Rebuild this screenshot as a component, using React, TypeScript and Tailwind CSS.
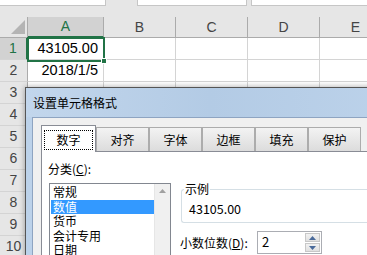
import React from "react";

const XL = { fontFamily: '"Liberation Sans", Arial, sans-serif' };
const CN = { fontFamily: '"Noto Sans CJK SC", "Noto Sans", sans-serif' };

function Row({ n }: { n: number }) {
  const sel = n === 1;
  return (
    <div className="flex h-[22px]">
      <div
        className={
          "w-[28px] shrink-0 flex items-center justify-center text-[14px] border-b border-[#d4d4d4] " +
          (sel ? "bg-[#d2d2d2] text-[#217346] border-r-2 border-r-[#217346]" : "bg-[#e6e6e6] text-[#444] border-r border-r-[#ababab]")
        }
      >
        {n}
      </div>
      <div className="w-[76px] shrink-0 border-r border-b border-[#d4d4d4] flex items-center justify-end pr-[5px] text-[14.5px] text-black">
        {n === 1 ? "43105.00" : n === 2 ? "2018/1/5" : ""}
      </div>
      <div className="w-[72px] shrink-0 border-r border-b border-[#d4d4d4]" />
      <div className="w-[72px] shrink-0 border-r border-b border-[#d4d4d4]" />
      <div className="w-[72px] shrink-0 border-r border-b border-[#d4d4d4]" />
      <div className="w-[72px] shrink-0 border-r border-b border-[#d4d4d4]" />
    </div>
  );
}

function Tab({ label, active }: { label: string; active?: boolean }) {
  if (active) {
    return (
      <div className="relative z-10 w-[55px] h-[27px] -mb-px bg-white border border-b-0 border-[#898c95] flex items-center justify-center px-[2px] pt-[2px]">
        <div className="w-full h-[20px] border border-dotted border-black flex items-center justify-center text-[12px] text-black">
          {label}
        </div>
      </div>
    );
  }
  return (
    <div className="w-[53px] h-[24px] bg-gradient-to-b from-[#f3f3f3] to-[#dcdcdc] border border-b-0 border-[#acacac] flex items-center justify-center text-[12px] text-black">
      {label}
    </div>
  );
}

const items = ["常规", "数值", "货币", "会计专用", "日期"];

export default function App() {
  const rows = [1, 2, 3, 4, 5, 6, 7, 8, 9, 10];
  return (
    <div className="relative w-[367px] h-[255px] overflow-hidden bg-white" style={XL}>
      {/* formula bar strip */}
      <div className="h-[17px] bg-[#e6e6e6] flex items-start">
        <div className="w-[106px] h-[6px] bg-white border-r border-b border-[#c6c6c6]" />
        <div className="w-[31px]" />
        <div className="w-[110px] h-[6px] bg-white border-x border-b border-[#c6c6c6]" />
        <div className="w-[4px]" />
        <div className="flex-1 h-[6px] bg-white border-l border-b border-[#c6c6c6]" />
      </div>
      {/* column headers */}
      <div className="flex h-[21px] bg-[#e6e6e6] text-[14px] text-[#444]">
        <div className="w-[28px] shrink-0 relative border-r border-b border-[#ababab]">
          <svg className="absolute left-[11px] top-[3px]" width="14" height="14" viewBox="0 0 14 14">
            <polygon points="14,0 14,14 0,14" fill="#b4b4b4" />
          </svg>
        </div>
        <div className="w-[76px] shrink-0 bg-[#d2d2d2] border-r border-[#ababab] border-b-2 border-b-[#217346] flex items-center justify-center text-[#217346]">
          A
        </div>
        <div className="w-[72px] shrink-0 border-r border-b border-[#ababab] flex items-center justify-center">B</div>
        <div className="w-[72px] shrink-0 border-r border-b border-[#ababab] flex items-center justify-center">C</div>
        <div className="w-[72px] shrink-0 border-r border-b border-[#ababab] flex items-center justify-center">D</div>
        <div className="w-[72px] shrink-0 border-r border-b border-[#ababab] flex items-center justify-center">E</div>
      </div>
      {rows.map((n) => (
        <Row key={n} n={n} />
      ))}

      {/* selection of A1 */}
      <div className="absolute left-[27px] top-[37px] w-[78px] h-[25px] border-2 border-[#217346]" />
      <div className="absolute left-[101px] top-[58px] w-[6px] h-[6px] bg-[#217346] border border-white" />

      {/* dialog */}
      <div className="absolute left-[25px] top-[87px] w-[370px] h-[190px] border border-[#555] bg-[#bcd2ea] shadow-[0_0_6px_rgba(0,0,0,0.35)]" style={CN}>
        <div className="h-[29px] bg-gradient-to-r from-[#c2d6ec] via-[#b3cbe5] to-[#bcd2ea] flex items-center pl-[7px] text-[12px] text-black">
          设置单元格格式
        </div>
        <div className="ml-[6px] h-[170px] bg-[#f0f0f0] border border-[#8ea4c1] pl-[8px] pt-[6px]">
          <div className="flex items-end h-[27px]">
            <Tab label="数字" active />
            <Tab label="对齐" />
            <Tab label="字体" />
            <Tab label="边框" />
            <Tab label="填充" />
            <Tab label="保护" />
          </div>
          <div className="h-[120px] bg-white border border-[#898c95] flex">
            <div className="w-[130px] shrink-0 pl-[6px]">
              <div className="h-[31px] flex items-center text-[12px] text-black pt-[2px]">
                分类(<span className="underline">C</span>):
              </div>
              <div className="ml-[1px] w-[122px] h-[90px] border border-[#828790] flex">
                <div className="flex-1 pt-[1px] pl-px text-[12px] text-black">
                  {items.map((t, i) => (
                    <div
                      key={t}
                      className={"h-[14.5px] pl-[2px] leading-[14px] overflow-visible " + (i === 1 ? "bg-[#3399ff] text-white" : "")}
                    >
                      {t}
                    </div>
                  ))}
                </div>
                <div className="w-[16px] bg-[#f0f0f0] border-l border-[#e6e6e6] flex justify-center pt-[5px]">
                  <svg width="7" height="4" viewBox="0 0 7 4">
                    <polygon points="0,4 7,4 3.5,0" fill="#a0a0a0" />
                  </svg>
                </div>
              </div>
            </div>
            <div className="flex-1 pt-[37px]">
              <div className="relative ml-[9px] h-[34px] border border-r-0 border-[#d5dfe5] rounded-l-[3px]">
                <div className="absolute -top-[9px] left-[2px] bg-white px-[1px] text-[12px] leading-[16px] text-black">示例</div>
                <div className="pl-[7px] pt-[11px] text-[12.5px] leading-[16px] text-black">43105.00</div>
              </div>
              <div className="mt-[8px] flex items-center h-[23px]">
                <div className="text-[12px] text-black w-[77px] ml-[8px]">
                  小数位数(<span className="underline">D</span>):
                </div>
                <div className="w-[65px] h-[23px] border border-[#abadb3] bg-white flex">
                  <div className="flex-1 pl-[4px] text-[13px] leading-[20px] text-black">2</div>
                  <div className="w-[17px] flex flex-col p-px gap-px">
                    <div className="flex-1 bg-gradient-to-b from-[#f2f2f2] to-[#e0e0e0] border border-[#c8c8c8] flex items-center justify-center">
                      <svg width="7" height="4" viewBox="0 0 7 4">
                        <polygon points="0,4 7,4 3.5,0" fill="#4a6a9a" />
                      </svg>
                    </div>
                    <div className="flex-1 bg-gradient-to-b from-[#f2f2f2] to-[#e0e0e0] border border-[#c8c8c8] flex items-center justify-center">
                      <svg width="7" height="4" viewBox="0 0 7 4">
                        <polygon points="0,0 7,0 3.5,4" fill="#4a6a9a" />
                      </svg>
                    </div>
                  </div>
                </div>
              </div>
            </div>
          </div>
        </div>
      </div>
    </div>
  );
}
